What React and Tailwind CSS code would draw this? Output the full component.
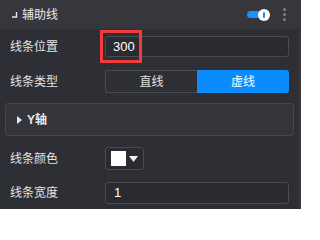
import React from "react";

const font = { fontFamily: '"Liberation Sans", "Noto Sans CJK SC", sans-serif' };

function Row({ label, children, className = "" }) {
  return (
    <div className={`flex items-center ${className}`}>
      <span className="w-[105px] shrink-0 pl-[10px] text-[12px] text-[#e4e4e6]">{label}</span>
      {children}
    </div>
  );
}

export default function App() {
  return (
    <div className="relative w-[301px] h-[209px] overflow-hidden bg-[#2e2f34] flex" style={font}>
      <div className="flex-1 flex flex-col">
        {/* header */}
        <div className="h-[29px] bg-[#36373c] flex items-center pl-[12px] pr-[13px]">
          <svg width="6" height="6" viewBox="0 0 6 6" className="mr-[4px] mt-[1px]">
            <path d="M4.5 0v5H0" stroke="#e6e6e6" strokeWidth="1.4" fill="none" />
          </svg>
          <span className="text-[12px] text-[#e8e8ea]">辅助线</span>
          <div className="ml-auto flex items-center">
            <div className="relative w-[23px] h-[12px] flex items-center">
              <div className="w-[20px] h-[7px] rounded-full bg-[#1890ff]" />
              <div className="absolute right-0 top-0 w-[12px] h-[12px] rounded-full bg-white flex items-center justify-center">
                <div className="w-[2px] h-[6px] bg-[#1890ff] rounded-sm" />
              </div>
            </div>
            <div className="ml-[13px] flex flex-col gap-[2px]">
              <div className="w-[3px] h-[3px] rounded-full bg-[#7d7f86]" />
              <div className="w-[3px] h-[3px] rounded-full bg-[#7d7f86]" />
              <div className="w-[3px] h-[3px] rounded-full bg-[#7d7f86]" />
            </div>
          </div>
        </div>

        <Row label="线条位置" className="mt-[7px]">
          <div className="w-[184px] h-[21px] rounded-[3px] border border-[#4a4b50] bg-[#2a2b30] flex items-center pl-[7px] text-[13px] text-white">
            300
          </div>
        </Row>

        <Row label="线条类型" className="mt-[13px]">
          <div className="w-[184px] h-[23px] flex text-[12px]">
            <div className="flex-1 rounded-l-[3px] border border-r-0 border-[#4a4b50] flex items-center justify-center text-[#e4e4e6]">
              直线
            </div>
            <div className="w-[92px] rounded-r-[3px] bg-[#0a8cff] flex items-center justify-center text-white">
              虚线
            </div>
          </div>
        </Row>

        <div className="mt-[10px] ml-[5px] mr-[5px] h-[33px] rounded-[3px] border border-[#46474c] bg-[#34353a] flex items-center pl-[11px]">
          <svg width="5" height="8" viewBox="0 0 5 8" className="mr-[5px]">
            <path d="M0 0L5 4L0 8Z" fill="#e8e8ea" />
          </svg>
          <span className="text-[12px] font-bold text-[#e8e8ea]">Y轴</span>
        </div>

        <Row label="线条颜色" className="mt-[11px]">
          <div className="w-[39px] h-[23px] rounded-[3px] border border-[#4a4b50] bg-[#2a2b30] flex items-center pl-[5px]">
            <div className="w-[15px] h-[15px] bg-white" />
            <svg width="9" height="6" viewBox="0 0 9 6" className="ml-[3px]">
              <path d="M0 0H9L4.5 6Z" fill="#f0f0f0" />
            </svg>
          </div>
        </Row>

        <Row label="线条宽度" className="mt-[12px]">
          <div className="w-[184px] h-[22px] rounded-[3px] border border-[#4a4b50] bg-[#2a2b30] flex items-center pl-[8px] text-[13px] text-white">
            1
          </div>
        </Row>
      </div>
      <div className="w-[2px] bg-[#36373c]" />

      {/* annotation box */}
      <div className="absolute left-[100px] top-[30px] w-[42px] h-[33px] border-[3px] border-[#f23c3c]" />
    </div>
  );
}
